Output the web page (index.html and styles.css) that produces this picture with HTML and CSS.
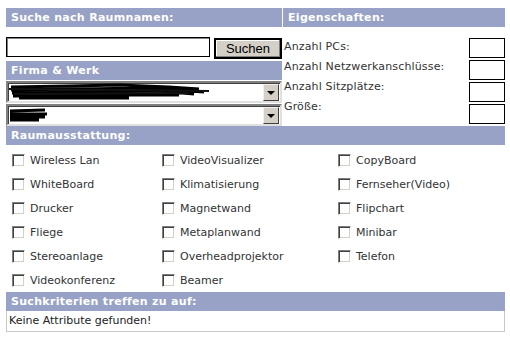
FILE: index.html
```html
<!DOCTYPE html>
<html lang="de">
<head>
    <meta charset="UTF-8">
    <title>Raumsuche</title>
    <link rel="stylesheet" href="styles.css">
</head>
<body>
    <div class="page">
        <div class="top">
            <div class="left">
                <div class="head">Suche nach Raumnamen:</div>
                <div class="search-row">
                    <input type="text" class="name-input">
                    <button class="search-btn">Suchen</button>
                </div>
                <div class="head">Firma &amp; Werk</div>
                <div class="select">
                    <svg class="scribble" width="200" height="18" viewBox="0 0 200 18">
                        <path d="M2 4 L60 3 L110 2 L160 4 L190 6 M2 7 L70 6 L140 5 L195 9 M3 10 L80 9 L150 8 L185 11 M4 13 L90 12 L170 12 M10 15 L120 15" stroke="#000" stroke-width="3" fill="none"/>
                        <path d="M0 6 L200 8 M5 11 L180 10" stroke="#111" stroke-width="2" fill="none"/>
                    </svg>
                    <span class="arrow"><i></i></span>
                </div>
                <div class="select">
                    <svg class="scribble" width="40" height="18" viewBox="0 0 40 18">
                        <path d="M1 5 L36 4 M1 8 L38 8 M1 11 L36 11 M1 14 L30 14" stroke="#000" stroke-width="3" fill="none"/>
                    </svg>
                    <span class="arrow"><i></i></span>
                </div>
            </div>
            <div class="right">
                <div class="head">Eigenschaften:</div>
                <div class="props">
                    <div class="labels">
                        <div>Anzahl PCs:</div>
                        <div>Anzahl Netzwerkanschlüsse:</div>
                        <div>Anzahl Sitzplätze:</div>
                        <div>Größe:</div>
                    </div>
                    <div class="boxes">
                        <input type="text" class="num">
                        <input type="text" class="num">
                        <input type="text" class="num">
                        <input type="text" class="num">
                    </div>
                </div>
            </div>
        </div>

        <div class="head">Raumausstattung:</div>
        <div class="equip">
            <label class="item"><span class="check"></span>Wireless Lan</label>
            <label class="item"><span class="check"></span>VideoVisualizer</label>
            <label class="item"><span class="check"></span>CopyBoard</label>
            <label class="item"><span class="check"></span>WhiteBoard</label>
            <label class="item"><span class="check"></span>Klimatisierung</label>
            <label class="item"><span class="check"></span>Fernseher(Video)</label>
            <label class="item"><span class="check"></span>Drucker</label>
            <label class="item"><span class="check"></span>Magnetwand</label>
            <label class="item"><span class="check"></span>Flipchart</label>
            <label class="item"><span class="check"></span>Fliege</label>
            <label class="item"><span class="check"></span>Metaplanwand</label>
            <label class="item"><span class="check"></span>Minibar</label>
            <label class="item"><span class="check"></span>Stereoanlage</label>
            <label class="item"><span class="check"></span>Overheadprojektor</label>
            <label class="item"><span class="check"></span>Telefon</label>
            <label class="item"><span class="check"></span>Videokonferenz</label>
            <label class="item"><span class="check"></span>Beamer</label>
        </div>

        <div class="head">Suchkriterien treffen zu auf:</div>
        <div class="result">Keine Attribute gefunden!</div>
    </div>
</body>
</html>
```

FILE: styles.css
```css
body {
    margin: 0;
    background: #fff;
    font-family: 'DejaVu Sans', Verdana, sans-serif;
    font-size: 11px;
    color: #222;
}

.page {
    width: 499px;
    margin: 8px 0 0 6px;
}

.top {
    display: flex;
    gap: 1px;
}

.left {
    width: 276px;
}

.right {
    width: 222px;
}

.head {
    height: 19px;
    line-height: 19px;
    background: #97a2c6;
    color: #fff;
    font-weight: bold;
    font-size: 11px;
    letter-spacing: 0.3px;
    padding-left: 5px;
}

.search-row {
    display: flex;
    justify-content: space-between;
    align-items: flex-start;
    padding: 10px 0 2px;
}

.name-input {
    box-sizing: border-box;
    width: 204px;
    height: 20px;
    margin: 0;
    border: 1px solid #000;
    box-shadow: inset 1px 1px #808080;
}

.search-btn {
    box-sizing: border-box;
    width: 68px;
    height: 21px;
    margin-top: 1px;
    padding: 0;
    background: #d4d0c8;
    border: 2px solid #000;
    box-shadow: inset -1px -1px #808080, inset 1px 1px #fff;
    font-family: 'Liberation Sans', Arial, sans-serif;
    font-size: 13px;
    color: #000;
}

.select {
    box-sizing: border-box;
    height: 22px;
    margin-top: 1px;
    border: 2px solid;
    border-color: #808080 #e0e0e0 #e0e0e0 #808080;
    box-shadow: inset 1px 1px #404040;
    background: #fff;
    display: flex;
    align-items: center;
    justify-content: space-between;
    padding-left: 1px;
}

.select + .select {
    margin-top: 1px;
}

.arrow {
    box-sizing: border-box;
    width: 16px;
    height: 17px;
    margin-right: 1px;
    background: #d4d0c8;
    border: 1px solid;
    border-color: #f0f0f0 #404040 #404040 #f0f0f0;
    display: flex;
    align-items: center;
    justify-content: center;
}

.arrow i {
    width: 0;
    height: 0;
    border-left: 4px solid transparent;
    border-right: 4px solid transparent;
    border-top: 4px solid #000;
    margin-top: 2px;
}

.props {
    display: flex;
    justify-content: space-between;
    padding-top: 10px;
}

.labels {
    padding-left: 1px;
    line-height: 20px;
    letter-spacing: 0.15px;
    color: #333;
}

.boxes {
    display: flex;
    flex-direction: column;
    gap: 2px;
    padding-top: 1px;
}

.num {
    box-sizing: border-box;
    width: 36px;
    height: 20px;
    margin: 0;
    border: 1px solid #000;
}

.equip {
    display: grid;
    grid-template-columns: 150px 176px 1fr;
    grid-auto-rows: 24px;
    padding: 3px 0 0 6px;
    color: #333;
}

.item {
    display: flex;
    align-items: center;
}

.check {
    box-sizing: border-box;
    width: 13px;
    height: 13px;
    margin-right: 5px;
    background: #fff;
    border: 1px solid;
    border-color: #808080 #fff #fff #808080;
    box-shadow: inset 1px 1px #404040, inset -1px -1px #d4d0c8;
}

.result {
    height: 21px;
    line-height: 20px;
    box-sizing: border-box;
    border: 1px solid #c8c8c8;
    border-top: none;
    padding-left: 2px;
    color: #222;
}
```
